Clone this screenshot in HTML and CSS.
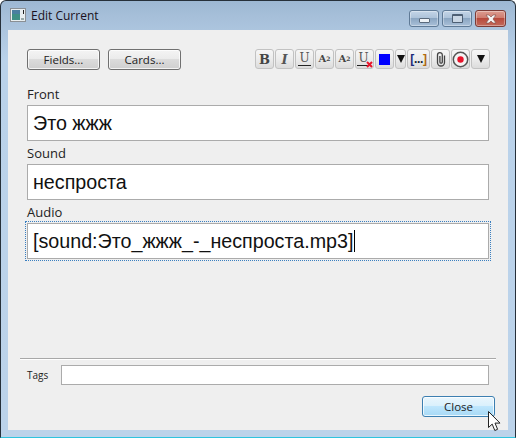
FILE: index.html
```html
<!DOCTYPE html>
<html lang="en">
<head>
<meta charset="utf-8">
<title>Edit Current</title>
<link rel="stylesheet" href="styles.css">
</head>
<body>
<div class="window">
  <header class="titlebar">
    <svg class="appicon" width="16" height="14" viewBox="0 0 16 14"><rect x="0.5" y="0.5" width="15" height="13" fill="#e8eef0" stroke="#8a8f94"/><rect x="2" y="2" width="8" height="10" fill="#3f8f86"/><rect x="2" y="2" width="8" height="4" fill="#4a7fa0"/><rect x="13" y="2" width="1" height="4" fill="#222"/><rect x="11" y="10" width="3" height="2" fill="#9aa"/></svg>
    <span class="title">Edit Current</span>
    <div class="controls">
      <div class="ctl"><span class="glyph-min"></span></div>
      <div class="ctl"><span class="glyph-max"></span></div>
      <div class="ctl ctl-close"><svg width="14" height="10" viewBox="0 0 14 10"><path d="M2 1h3l2 2 2-2h3L9 5l3 4H9L7 7 5 9H2l3-4z" fill="#f4f4f4" stroke="#7a4a44" stroke-width="0.6"/></svg></div>
    </div>
  </header>
  <main class="panel">
    <div class="top">
      <div class="left-btns">
        <button class="btn">Fields...</button>
        <button class="btn">Cards...</button>
      </div>
      <div class="tools">
        <div class="tool serif bold big">B</div>
        <div class="tool serif italic big">I</div>
        <div class="tool serif"><span class="u">U</span></div>
        <div class="tool serif small bold">A<sup>2</sup></div>
        <div class="tool serif small bold">A<sub>2</sub></div>
        <div class="tool serif clear"><span class="u">U</span><svg class="redx" width="7" height="7" viewBox="0 0 7 7"><path d="M1 1l5 5M6 1l-5 5" stroke="#e8132a" stroke-width="2"/></svg></div>
        <div class="tool"><span class="swatch"></span></div>
        <div class="tool narrow"><span class="arrow"></span></div>
        <div class="tool cloze"><span class="cl-b">[</span>...<span class="cl-o">]</span></div>
        <div class="tool"><svg width="12" height="16" viewBox="0 0 12 16"><path d="M9.5 4.5v7a3.5 3.5 0 0 1-7 0V4a2.4 2.4 0 0 1 4.8 0v7a1.2 1.2 0 0 1-2.4 0V5" fill="none" stroke="#444" stroke-width="1.3"/></svg></div>
        <div class="tool"><svg width="17" height="17" viewBox="0 0 17 17"><circle cx="8.5" cy="8.5" r="7.2" fill="#f4f4f4" stroke="#555" stroke-width="1.5"/><circle cx="8.5" cy="8.5" r="3.2" fill="#e8132a"/></svg></div>
        <div class="tool"><span class="arrow"></span></div>
      </div>
    </div>
    <section class="fields">
      <div class="field">
        <label class="flabel">Front</label>
        <div class="finput">Это жжж</div>
      </div>
      <div class="field">
        <label class="flabel">Sound</label>
        <div class="finput">неспроста</div>
      </div>
      <div class="field">
        <label class="flabel">Audio</label>
        <div class="focus"><div class="finput">[sound:Это_жжж_-_неспроста.mp3]<span class="caret"></span></div></div>
      </div>
    </section>
    <hr class="sep">
    <div class="tags">
      <span class="tlabel">Tags</span>
      <div class="tinput"></div>
    </div>
    <div class="bottom">
      <button class="btn btn-hot">Close</button>
    </div>
    <svg class="cursor" width="14" height="21" viewBox="0 0 14 21"><path d="M0.5 0.5v16l3.7-3.4 2.6 6.4 2.8-1.2-2.6-6.2h5z" fill="#fff" stroke="#222" stroke-width="1"/></svg>
  </main>
</div>
</body>
</html>
```
FILE: styles.css
```css
* { box-sizing: border-box; }
html, body { margin: 0; padding: 0; }
body { width: 516px; height: 438px; background: #fff; font-family: "Open Sans", "Noto Sans", sans-serif; overflow: hidden; }
.window { width: 516px; height: 438px; display: flex; flex-direction: column; border: 1px solid #26303a; border-bottom-color: #2fc4de; border-radius: 6px 6px 0 0; background: linear-gradient(#9db8d3 0, #a6bfd9 15px, #bad2ea 60px, #bcd3ea 100%); padding: 0 7px 7px; }
.titlebar { height: 29px; display: flex; align-items: center; flex: none; position: relative; }
.appicon { margin-left: 2px; margin-top: -1px; }
.title { font-size: 12px; color: #1a1020; margin-left: 5px; margin-top: -1px; }
.controls { margin-left: auto; display: flex; align-self: flex-start; margin-top: 9px; margin-right: 2px; gap: 3px; }
.ctl { width: 30px; height: 17px; border: 1px solid #5f7a96; border-radius: 3px; background: linear-gradient(#c4d5e7 0, #adc3da 45%, #8ba6c2 50%, #a9c0d8 100%); display: flex; align-items: center; justify-content: center; box-shadow: inset 0 0 0 1px rgba(255,255,255,0.35); }
.ctl-close { width: 31px; border-color: #7b3b36; background: linear-gradient(#dc9c90 0, #cf7d70 45%, #b84a3c 50%, #c26a5c 100%); }
.glyph-min { width: 11px; height: 5px; margin-top: 4px; background: #eef2f6; border: 1px solid #5a6a7c; border-radius: 1px; }
.glyph-max { width: 11px; height: 9px; background: #c9d6e4; border: 1px solid #4d5f74; border-top-width: 2px; border-radius: 1px; }
.panel { flex: 1; background: #efefef; position: relative; display: flex; flex-direction: column; padding: 19px 19px 0; }
.top { display: flex; justify-content: space-between; height: 21px; }
.left-btns { display: flex; gap: 8px; }
.btn { width: 73px; height: 21px; border: 1px solid #707070; border-radius: 3px; background: linear-gradient(#f4f4f4 0, #ebebeb 48%, #dcdcdc 50%, #cfcfcf 100%); box-shadow: inset 0 0 0 1px rgba(255,255,255,0.75); font-family: "Open Sans", "Noto Sans", sans-serif; font-size: 11.5px; color: #222; padding: 0; }
.tools { display: flex; gap: 1px; margin-right: -1px; }
.tool { width: 19px; height: 20px; border: 1px solid #c2c2c2; border-radius: 3px; background: linear-gradient(#f6f6f6 0, #ececec 50%, #dcdcdc 100%); display: flex; align-items: center; justify-content: center; position: relative; color: #444; font-size: 14px; line-height: 1; }
.tool.narrow { width: 11px; }
.tool.cloze { width: 23px; font-family: "Liberation Sans", sans-serif; font-size: 12px; font-weight: bold; color: #123; letter-spacing: -0.3px; }
.serif { font-family: "DejaVu Serif", serif; }
.big { font-size: 13px; }
.bold { font-weight: bold; }
.italic { font-style: italic; font-weight: bold; color: #555; }
.small { font-size: 10px; }
.small sup, .small sub { font-size: 6px; line-height: 0; }
.u { border-bottom: 1px solid #222; font-size: 12px; line-height: 13px; color: #555; padding: 0 1px; }
.redx { position: absolute; right: 0; bottom: 0; }
.clear .u { margin-right: 2px; margin-top: -1px; }
.swatch { width: 11px; height: 11px; background: #0000ff; }
.arrow { width: 0; height: 0; border-left: 4px solid transparent; border-right: 4px solid transparent; border-top: 8px solid #111; }
.cl-b { color: #1a2a7a; }
.cl-o { color: #b06a10; }
.fields { display: flex; flex-direction: column; margin-top: 13px; gap: 1px; }
.field { display: flex; flex-direction: column; }
.flabel { font-size: 13px; line-height: 22px; height: 22px; color: #222; }
.finput { height: 36px; background: #fff; border: 1px solid #ababab; font-family: "Liberation Sans", Arial, sans-serif; font-size: 19.7px; color: #111; display: flex; align-items: center; padding-left: 5px; white-space: nowrap; }
.focus { margin: -2px -2px 0; padding: 1px; border: 1px dotted #3a7fc0; }
.caret { width: 1px; height: 22px; background: #000; margin-left: 1px; }
.sep { margin: 97px 0 0 -7px; width: 476px; height: 2px; border: none; border-top: 1px solid #a8a8a8; border-bottom: 1px solid #fff; flex: none; }
.tags { display: flex; align-items: center; margin-top: 5px; height: 20px; }
.tlabel { font-size: 10px; width: 34px; color: #222; }
.tinput { flex: 1; height: 20px; background: #fff; border: 1px solid #ababab; }
.bottom { display: flex; justify-content: flex-end; margin-top: 11px; margin-right: -6px; }
.btn-hot { height: 21px; border-color: #3c7fb1; background: linear-gradient(#eaf6fd 0, #d9f0fc 48%, #bee6fd 50%, #a7d9f5 100%); }
.cursor { position: absolute; left: 480px; top: 381px; }
```
